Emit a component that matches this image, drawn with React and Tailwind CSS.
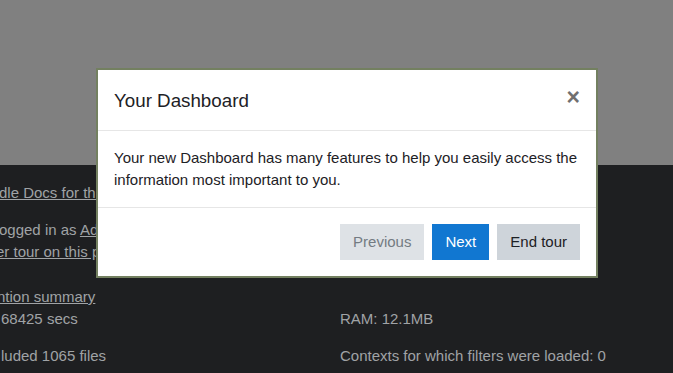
export default function App() {
  const font = { fontFamily: '"Liberation Sans", Arial, sans-serif' }
  return (
    <div className="relative w-full h-[373px] overflow-hidden flex flex-col text-[15px] leading-[22px]" style={font}>
      <div className="h-[165px] bg-[#808080]" />
      <div className="flex-1 bg-[#1e1f21] text-[#a0a3a6] pt-[17px] overflow-hidden">
        <div className="flex">
          <div className="w-[340px] shrink-0 whitespace-nowrap">
            <div className="-ml-[1px]"><span className="underline">dle Docs for this page</span></div>
            <div className="mt-[15px] -ml-[1px]">ogged in as <span className="underline">Admin User</span> (<span className="underline">Log out</span>)</div>
            <div className="-ml-[4px]"><span className="underline">er tour on this page</span></div>
            <div className="mt-[23px] -ml-[3px]"><span className="underline">ntion summary</span></div>
            <div className="ml-[1px]">68425 secs</div>
            <div className="mt-[15px] ml-[1px]">luded 1065 files</div>
          </div>
          <div className="whitespace-nowrap">
            <div className="h-[22px]" />
            <div className="mt-[15px] h-[22px]" />
            <div className="h-[22px]" />
            <div className="mt-[23px] h-[22px]" />
            <div>RAM: 12.1MB</div>
            <div className="mt-[15px]">Contexts for which filters were loaded: 0</div>
          </div>
        </div>
      </div>

      <div className="absolute left-[96px] top-[68px] w-[502px] bg-white border-2 border-[#738060] text-[#1d2125]">
        <div className="h-[61px] px-4 flex items-center border-b border-[#e6e6e6]">
          <h5 className="text-[18.75px] leading-[22px] pt-[1px]">Your Dashboard</h5>
          <button className="ml-auto -mt-[6px] text-[23px] leading-none font-bold text-[#707070]">×</button>
        </div>
        <div className="px-4 py-4 border-b border-[#e6e6e6]">
          <p className="leading-[22px]">Your new Dashboard has many features to help you easily access the information most important to you.</p>
        </div>
        <div className="p-4 flex justify-end">
          <button className="h-[36px] px-[13px] mr-2 bg-[#dee2e6] text-[#737b82]">Previous</button>
          <button className="h-[36px] px-[13px] mr-2 bg-[#1177d1] text-white">Next</button>
          <button className="h-[36px] px-[13px] bg-[#ced4da] text-[#1d2125]">End tour</button>
        </div>
      </div>
    </div>
  )
}
